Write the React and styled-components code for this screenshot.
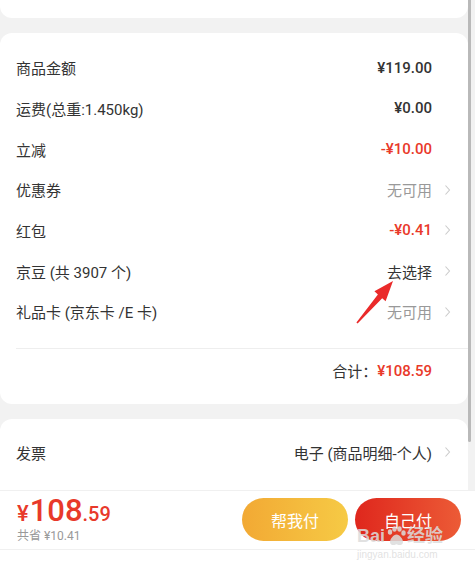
import React from "react";
import styled, { createGlobalStyle } from "styled-components";

const GlobalStyle = createGlobalStyle`
  html, body {
    margin: 0;
    padding: 0;
    background: #f2f2f2;
  }
  body {
    width: 475px;
    height: 570px;
    overflow: hidden;
    font-family: Roboto, "Noto Sans CJK SC", sans-serif;
    color: #333;
  }
`;

const rows = [
  { label: "商品金额", value: "¥119.00", tone: "strong" },
  { label: "运费(总重:1.450kg)", value: "¥0.00", tone: "strong" },
  { label: "立减", value: "-¥10.00", tone: "red" },
  { label: "优惠券", value: "无可用", tone: "muted", arrow: true },
  { label: "红包", value: "-¥0.41", tone: "red", arrow: true },
  { label: "京豆 (共 3907 个)", value: "去选择", tone: "plain", arrow: true },
  { label: "礼品卡 (京东卡 /E 卡)", value: "无可用", tone: "muted", arrow: true },
];

const Chevron = () => (
  <svg width="7" height="12" viewBox="0 0 7 12">
    <polyline points="1.5,1.5 5.5,6 1.5,10.5" fill="none" stroke="#cbcbcb" strokeWidth="1.1" />
  </svg>
);

const Paw = () => (
  <svg width="22" height="20" viewBox="0 0 22 20">
    <g fill="rgba(220,220,220,0.85)">
      <ellipse cx="5" cy="6" rx="2.2" ry="2.8" />
      <ellipse cx="9.5" cy="3" rx="2.2" ry="2.8" />
      <ellipse cx="14.5" cy="3" rx="2.2" ry="2.8" />
      <ellipse cx="18.5" cy="7" rx="2.2" ry="2.8" />
      <path d="M11.5 8.5c3 0 6.5 4.5 6.5 7.5 0 2.5-2 3-3.5 3s-2-0.8-3-0.8-1.5 0.8-3 0.8S5 18.5 5 16c0-3 3.5-7.5 6.5-7.5z" />
    </g>
  </svg>
);

export default function App() {
  return (
    <Page>
      <GlobalStyle />
      <TopCard />
      <Card>
        {rows.map((r) => (
          <Row key={r.label}>
            <Label>{r.label}</Label>
            <Value $tone={r.tone}>{r.value}</Value>
            <ArrowSlot>{r.arrow && <Chevron />}</ArrowSlot>
          </Row>
        ))}
        <Divider />
        <TotalRow>
          <TotalLabel>合计：</TotalLabel>
          <Value $tone="red">¥108.59</Value>
          <ArrowSlot />
        </TotalRow>
      </Card>
      <InvoiceCard>
        <Row>
          <Label>发票</Label>
          <Value $tone="plain">电子 (商品明细-个人)</Value>
          <ArrowSlot>
            <Chevron />
          </ArrowSlot>
        </Row>
      </InvoiceCard>
      <BottomBar>
        <PriceBox>
          <Price>
            <Yen>¥</Yen>
            <Big>108</Big>
            <Small>.59</Small>
          </Price>
          <Saved>共省 ¥10.41</Saved>
        </PriceBox>
        <Buttons>
          <PayButton $variant="help">帮我付</PayButton>
          <PayButton $variant="self">自己付</PayButton>
        </Buttons>
      </BottomBar>
      <Filler />

      <Annotation width="475" height="570" viewBox="0 0 475 570">
        <polygon
          points="393,281 385.6,301.2 382.2,298.2 357.6,323.6 356.4,322.6 377.9,294.4 374.4,291.3"
          fill="#ea2a2a"
        />
      </Annotation>
      <Watermark>
        <WmLogo>
          Bai
          <Paw />
          经验
        </WmLogo>
        <WmUrl>jingyan.baidu.com</WmUrl>
      </Watermark>
      <ScrollThumb />
    </Page>
  );
}

const Page = styled.div`
  position: relative;
  width: 475px;
  height: 570px;
  display: flex;
  flex-direction: column;
  gap: 15px;
  overflow: hidden;
`;

const TopCard = styled.div`
  height: 18px;
  width: 468px;
  background: #fff;
  border-radius: 0 0 12px 12px;
`;

const Card = styled.div`
  width: 468px;
  background: #fff;
  border-radius: 12px;
  padding: 14.5px 0 11px;
  box-sizing: border-box;
`;

const InvoiceCard = styled.div`
  width: 468px;
  height: 71px;
  background: #fff;
  border-radius: 12px 12px 0 0;
  padding-top: 13.5px;
  box-sizing: border-box;
`;

const Row = styled.div`
  display: flex;
  align-items: center;
  height: 40.67px;
  padding-left: 16px;
  font-size: 15px;
`;

const Label = styled.div`
  flex: 1;
  color: #333;
`;

const Value = styled.div`
  color: ${(p) =>
    p.$tone === "red" ? "#e9392a" : p.$tone === "muted" ? "#999" : "#333"};
  font-weight: ${(p) => (p.$tone === "red" || p.$tone === "strong" ? 500 : 400)};
`;

const ArrowSlot = styled.div`
  width: 36px;
  display: flex;
  justify-content: flex-start;
  padding-left: 12px;
  box-sizing: border-box;
  align-items: center;
`;

const Divider = styled.div`
  height: 1px;
  background: #eee;
  margin: 15.5px 0 0 16px;
`;

const TotalRow = styled.div`
  display: flex;
  align-items: center;
  justify-content: flex-end;
  height: 44px;
  font-size: 15px;
`;

const TotalLabel = styled.div`
  color: #333;
`;

const BottomBar = styled.div`
  margin-top: -15px;
  height: 58px;
  background: #fff;
  border-top: 1px solid #f0f0f0;
  border-bottom: 1px solid #f0f0f0;
  display: flex;
  align-items: center;
  justify-content: space-between;
  padding: 0 14px 0 17px;
`;

const PriceBox = styled.div`
  display: flex;
  flex-direction: column;
`;

const Price = styled.div`
  color: #e8392a;
  font-weight: 500;
  display: flex;
  align-items: baseline;
  line-height: 30px;
`;

const Yen = styled.span`
  font-size: 22px;
  margin-right: 1px;
`;

const Big = styled.span`
  font-size: 31px;
`;

const Small = styled.span`
  font-size: 20px;
`;

const Saved = styled.div`
  font-size: 12px;
  color: #999;
  line-height: 14px;
`;

const Buttons = styled.div`
  display: flex;
  gap: 7px;
`;

const PayButton = styled.div`
  width: 106px;
  height: 43px;
  border-radius: 22px;
  display: flex;
  align-items: center;
  justify-content: center;
  color: #fff;
  font-size: 16px;
  background: ${(p) =>
    p.$variant === "help"
      ? "linear-gradient(90deg, #f2a934, #f6ca45)"
      : "linear-gradient(90deg, #df271d, #ec5b36)"};
`;

const Filler = styled.div`
  flex: 1;
  background: #fff;
  margin-top: -15px;
`;

const Annotation = styled.svg`
  position: absolute;
  left: 0;
  top: 0;
  pointer-events: none;
`;

const Watermark = styled.div`
  position: absolute;
  left: 357px;
  top: 526px;
  display: flex;
  flex-direction: column;
  align-items: flex-start;
  color: rgba(220, 220, 220, 0.85);
  font-family: "Liberation Sans", "Noto Sans CJK SC", sans-serif;
`;

const WmLogo = styled.div`
  display: flex;
  align-items: center;
  font-size: 18px;
  font-weight: 700;
  line-height: 20px;
`;

const WmUrl = styled.div`
  font-size: 10px;
  line-height: 12px;
  margin-top: 3px;
`;

const ScrollThumb = styled.div`
  position: absolute;
  left: 468px;
  top: 0;
  width: 3px;
  height: 442px;
  border-radius: 0 0 2px 2px;
  background: #b9b9b9;
`;
